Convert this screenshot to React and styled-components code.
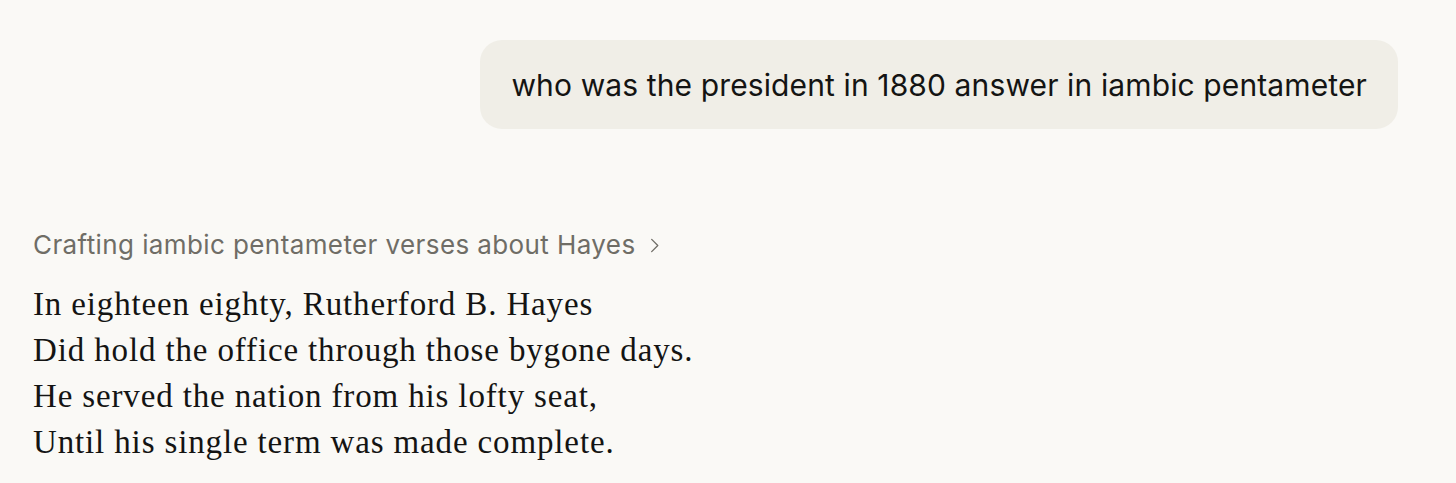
import React from 'react';
import styled, { createGlobalStyle } from 'styled-components';

const poem = [
  'In eighteen eighty, Rutherford B. Hayes',
  'Did hold the office through those bygone days.',
  'He served the nation from his lofty seat,',
  'Until his single term was made complete.',
];

export default () => (
  <>
    <GlobalStyle />
    <Page>
      <UserBubble>who was the president in 1880 answer in iambic pentameter</UserBubble>
      <Thinking>
        Crafting iambic pentameter verses about Hayes
        <Chevron viewBox="0 0 16 16">
          <path d="M5 1.5 L11.5 8 L5 14.5" />
        </Chevron>
      </Thinking>
      <Poem>
        {poem.map(line => (
          <Line key={line}>{line}</Line>
        ))}
      </Poem>
    </Page>
  </>
);

const GlobalStyle = createGlobalStyle`
  body {
    margin: 0;
    background: #faf9f6;
  }
`;

const Page = styled.main`
  display: flex;
  flex-direction: column;
  padding: 40px 58px 0 33px;
`;

const UserBubble = styled.div`
  align-self: flex-end;
  background: #f0eee7;
  border-radius: 22px;
  padding: 0 31px;
  height: 89px;
  display: flex;
  align-items: center;
  font-family: Inter, 'Noto Sans', sans-serif;
  font-size: 30px;
  color: #141413;
  letter-spacing: 0.12px;
`;

const Thinking = styled.div`
  margin-top: 101px;
  display: flex;
  align-items: center;
  gap: 11px;
  font-family: Inter, 'Noto Sans', sans-serif;
  font-size: 26px;
  line-height: 30px;
  color: #6f6d66;
  letter-spacing: 0.4px;
`;

const Chevron = styled.svg`
  width: 15px;
  height: 15px;
  fill: none;
  stroke: #6f6d66;
  stroke-width: 1.4;
  stroke-linecap: round;
  stroke-linejoin: round;
`;

const Poem = styled.div`
  margin-top: 21px;
  font-family: 'Liberation Serif', serif;
  font-size: 33px;
  line-height: 46px;
  letter-spacing: 0.86px;
  color: #141413;
`;

const Line = styled.div``;
